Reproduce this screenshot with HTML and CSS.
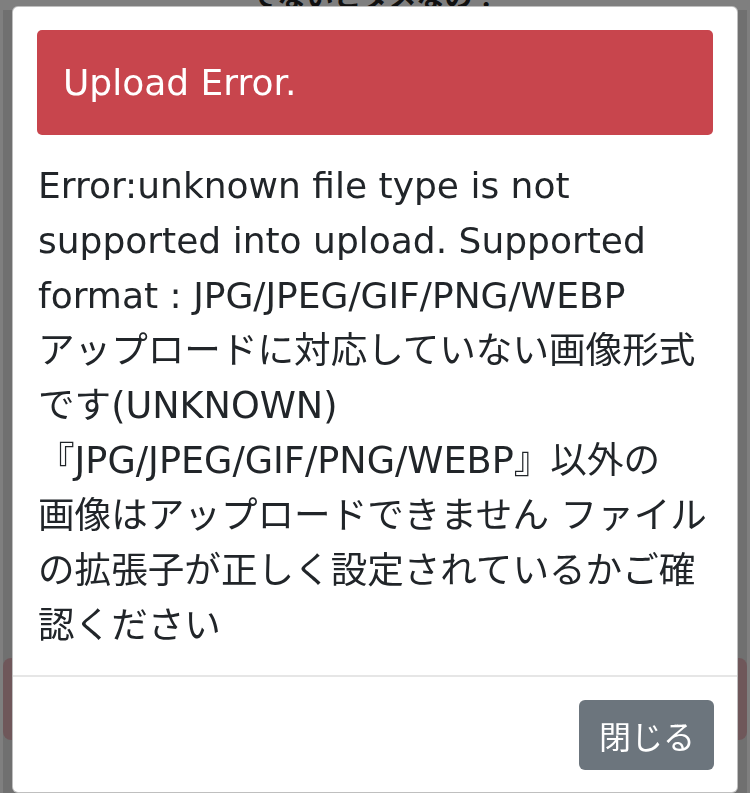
FILE: index.html
```html
<!DOCTYPE html>
<html lang="ja">
<head>
<meta charset="utf-8">
<title>Upload Error</title>
<link rel="stylesheet" href="styles.css">
</head>
<body>
<div class="page">
  <p class="page-question">でないとダメなの？</p>
  <div class="page-danger"></div>
</div>
<div class="backdrop"></div>
<div class="modal">
  <div class="modal-content">
    <div class="modal-body">
      <div class="alert">Upload Error.</div>
      <p class="message">Error:unknown file type is not<br>supported into upload. Supported<br>format : JPG/JPEG/GIF/PNG/WEBP<br><span class="message-ja">アップロードに対応していない画像形式<br>です(UNKNOWN)<br>『JPG/JPEG/GIF/PNG/WEBP』以外の<br>画像はアップロードできません ファイル<br>の拡張子が正しく設定されているかご確<br>認ください</span></p>
    </div>
    <div class="modal-footer">
      <button class="btn" type="button">閉じる</button>
    </div>
  </div>
</div>
</body>
</html>
```

FILE: styles.css
```css
html, body {
  margin: 0;
  padding: 0;
  height: 100%;
  overflow: hidden;
  background: #ffffff;
}

.page {
  margin: 0 3px;
  height: 100%;
  background: #e0e0e0;
  display: flex;
  flex-direction: column;
}

.page-question {
  margin: -20px 0 0;
  height: 30px;
  font-family: "Noto Sans CJK JP", sans-serif;
  font-size: 28px;
  line-height: 30px;
  font-weight: bold;
  color: #222;
  text-align: center;
  background: #ffffff;
}

.page-danger {
  margin-top: 648px;
  height: 82px;
  border-radius: 8px;
  background: #dfafb4;
}

.backdrop {
  position: fixed;
  inset: 0;
  background: rgba(0, 0, 0, 0.5);
}

.modal {
  position: fixed;
  inset: 0;
  padding: 6px 12px 0;
}

.modal-content {
  background: #ffffff;
  border: 1px solid rgba(0, 0, 0, 0.25);
  border-radius: 6px;
  font-family: "DejaVu Sans", "Noto Sans CJK JP", sans-serif;
  color: #212529;
}

.modal-body {
  padding: 23px 24px 22px;
}

.alert {
  background: #c8454d;
  color: #ffffff;
  border-radius: 5px;
  padding: 25px 26px;
  font-size: 36px;
  line-height: 55px;
}

.message {
  margin: 23px 0 0 1px;
  font-size: 36px;
  line-height: 55px;
}

.message-ja {
  font-size: 36.6px;
}

.modal-footer {
  border-top: 2px solid #e6e6e6;
  padding: 23px 23px 22px;
  display: flex;
  justify-content: flex-end;
}

.btn {
  background: #6c757d;
  color: #ffffff;
  border: none;
  border-radius: 6px;
  padding: 11px 19px 11px 20px;
  font-family: "Noto Sans CJK JP", sans-serif;
  font-size: 32px;
  line-height: 48px;
}
```
